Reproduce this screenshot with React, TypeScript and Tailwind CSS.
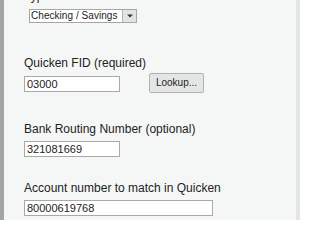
import React from "react";

const font = { fontFamily: '"Liberation Sans", Arial, sans-serif' };

export default function App() {
  return (
    <div
      className="w-[300px] h-[220px] flex bg-[#f5f7f7] overflow-hidden text-[#222222]"
      style={font}
    >
      <div className="w-[4px] shrink-0 bg-[#a0a5a5]" />
      <div className="flex-1 flex flex-col pl-[20px]">
        <div className="-mt-[11px] text-[12px] leading-[14px]">Type</div>
        <div className="mt-[6px] ml-[5px] flex h-[14px] w-[108px] border border-[#a6a6a6] bg-white">
          <div className="flex-1 flex items-center pl-[1px] text-[10px] leading-[12px] tracking-[0.05px] whitespace-nowrap overflow-hidden">
            Checking / Savings
          </div>
          <div className="w-[14px] flex items-center justify-center border-l border-[#b5b5b5] bg-[#e2e4e4]">
            <svg width="6" height="4" viewBox="0 0 6 4">
              <path d="M0 0.5 L6 0.5 L3 3.5 Z" fill="#333333" />
            </svg>
          </div>
        </div>

        <div className="mt-[33px] text-[12px] leading-[14px]">Quicken FID (required)</div>
        <div className="mt-[3px] flex items-start">
          <input
            readOnly
            value="03000"
            className="mt-[3px] w-[96px] h-[16px] px-[2px] border border-[#a9a9a9] bg-white text-[11px] leading-[14px] text-[#222222] outline-none"
            style={font}
          />
          <button
            className="ml-[29px] w-[55px] h-[20px] rounded-[2px] border border-[#aeb1b1] bg-[#e4e6e6] text-[10px] leading-[12px] text-[#222222] flex items-center justify-center"
            style={font}
          >
            Lookup...
          </button>
        </div>

        <div className="mt-[29px] text-[12px] leading-[14px]">Bank Routing Number (optional)</div>
        <input
          readOnly
          value="321081669"
          className="mt-[5px] w-[96px] h-[16px] px-[2px] border border-[#a9a9a9] bg-white text-[11px] leading-[14px] text-[#222222] outline-none"
          style={font}
        />

        <div className="mt-[24px] text-[12px] leading-[14px]">Account number to match in Quicken</div>
        <input
          readOnly
          value="80000619768"
          className="mt-[5px] w-[189px] h-[16px] px-[2px] border border-[#a9a9a9] bg-white text-[11px] leading-[14px] text-[#222222] outline-none"
          style={font}
        />
      </div>
      <div className="w-[4px] shrink-0 bg-[#e4e6e6]" />
    </div>
  );
}
